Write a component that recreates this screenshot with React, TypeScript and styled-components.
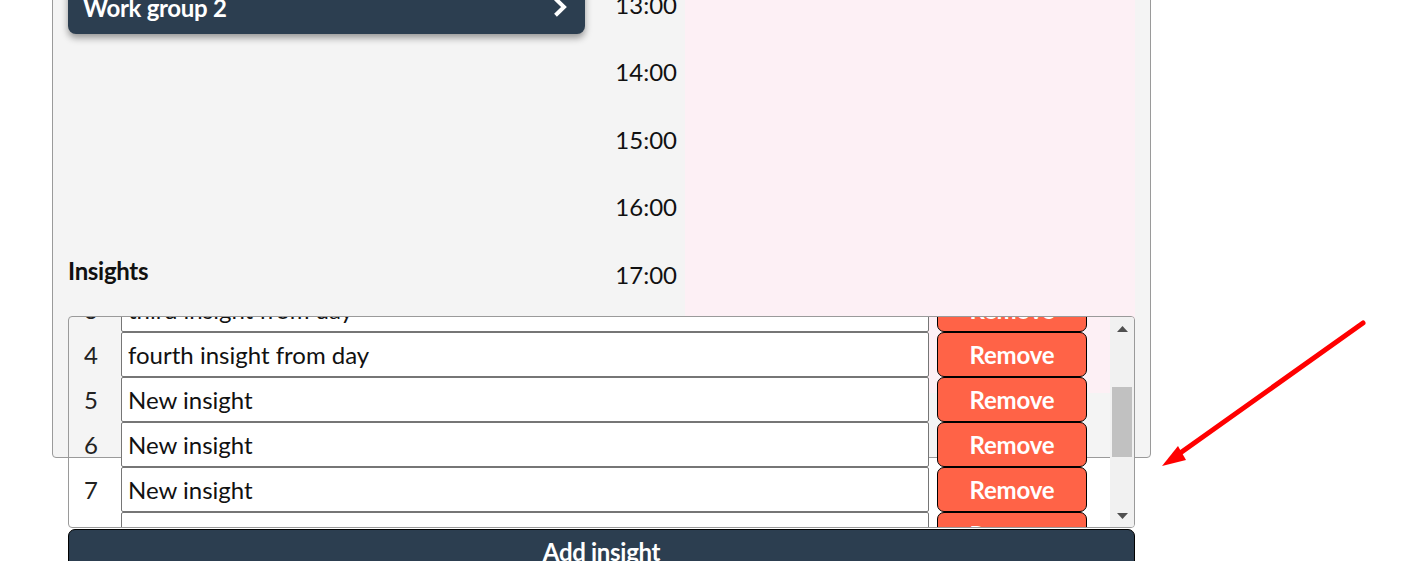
import React, { useLayoutEffect, useRef } from "react";
import styled, { createGlobalStyle } from "styled-components";

const GlobalStyle = createGlobalStyle`
  html, body {
    margin: 0;
    padding: 0;
    background: #ffffff;
    overflow: hidden;
  }
  body {
    font-family: Lato, "Noto Sans", sans-serif;
    color: #111;
  }
  * { box-sizing: border-box; }
`;

const Page = styled.div`
  position: relative;
  height: 561px;
  overflow: hidden;
  padding-left: 52px;
`;

const Panel = styled.section`
  width: 1099px;
  height: 570px;
  margin-top: -112px;
  padding: 15px;
  background: #f4f4f4;
  border: 1px solid #9a9a9a;
  border-radius: 4px;
  display: grid;
  grid-template-columns: 517px 1fr;
  grid-template-rows: 352px auto;
  align-content: start;
`;

const GroupList = styled.div`
  grid-column: 1;
  grid-row: 1;
  display: flex;
  flex-direction: column;
  gap: 16px;
  padding-top: 6px;
`;

const GroupButton = styled.button`
  height: 54px;
  padding: 0 18px 0 15px;
  display: flex;
  align-items: center;
  justify-content: space-between;
  background: #2c3e50;
  color: #fff;
  border: none;
  border-radius: 8px;
  box-shadow: 0 4px 7px rgba(0, 0, 0, 0.38);
  font-family: Lato, sans-serif;
  font-weight: 700;
  font-size: 24px;
  line-height: 29px;
  letter-spacing: -0.3px;
`;

const Schedule = styled.div`
  grid-column: 2;
  grid-row: 1 / 3;
  align-self: start;
  display: grid;
  grid-template-columns: 100px 1fr;
`;

const HourColumn = styled.div`
  display: flex;
  flex-direction: column;
`;

const HourLabel = styled.div`
  height: 67.5px;
  display: flex;
  align-items: center;
  justify-content: flex-end;
  padding-right: 8px;
  padding-bottom: 2px;
  font-size: 24px;
  line-height: 29px;
  color: #111;
`;

const DayArea = styled.div`
  height: 489px;
  background: #fdf0f5;
`;

const InsightsSection = styled.div`
  grid-column: 1 / -1;
  grid-row: 2;
  display: flex;
  flex-direction: column;
`;

const Heading = styled.h3`
  margin: 0 0 31px;
  font-size: 24px;
  line-height: 29px;
  font-weight: 700;
  letter-spacing: -0.3px;
  color: #111;
`;

const ListFrame = styled.div`
  height: 212px;
  border: 1px solid #9a9a9a;
  border-radius: 4px;
  display: flex;
  overflow: hidden;
`;

const RowsViewport = styled.div`
  flex: 1;
  overflow: hidden;
`;

const RowsContent = styled.div`
  padding: 21px 0;
`;

const Row = styled.div`
  height: 45px;
  display: grid;
  grid-template-columns: 44px 1fr 150px;
  column-gap: 8px;
  padding-right: 23px;
  align-items: center;
`;

const RowNumber = styled.span`
  text-align: center;
  font-size: 24px;
  color: #222;
`;

const InsightInput = styled.input`
  height: 45px;
  width: 100%;
  border: 1px solid #767676;
  border-radius: 2px;
  padding: 0 6px;
  background: #fff;
  font-family: Lato, sans-serif;
  font-size: 24px;
  color: #111;
  outline: none;
`;

const RemoveButton = styled.button`
  height: 45px;
  border: 1px solid #000;
  border-radius: 7px;
  background: #ff6347;
  color: #fff;
  font-family: Lato, sans-serif;
  font-weight: 700;
  font-size: 24px;
  letter-spacing: -0.2px;
  padding: 0;
`;

const ScrollBar = styled.div`
  width: 24px;
  background: #f1f1f1;
  display: flex;
  flex-direction: column;
`;

const ScrollArrow = styled.div`
  height: 23px;
  display: flex;
  align-items: center;
  justify-content: center;
`;

const ScrollTrack = styled.div`
  flex: 1;
  padding: 0 2px;
`;

const ScrollThumb = styled.div`
  background: #c1c1c1;
`;

const AddButton = styled.button`
  margin-top: 1px;
  height: 45px;
  width: 100%;
  border: 1px solid #000;
  border-radius: 7px;
  background: #2c3e50;
  color: #fff;
  font-family: Lato, sans-serif;
  font-weight: 700;
  font-size: 24px;
  letter-spacing: -0.3px;
`;

const Annotation = styled.svg`
  position: absolute;
  left: 0;
  top: 0;
  pointer-events: none;
`;

const insights = [
  "first insight from day",
  "second insight from day",
  "third insight from day",
  "fourth insight from day",
  "New insight",
  "New insight",
  "New insight",
  "New insight",
  "New insight",
  "New insight",
];

const hours = ["12:00", "13:00", "14:00", "15:00", "16:00", "17:00", "18:00"];

const SCROLL_TOP = 141;
const VIEW_H = 210;
const ROW_H = 45;
const PAD = 21;
const ARROW_H = 23;

const Chevron = () => (
  <svg width="14" height="20" viewBox="0 0 14 20">
    <path d="M2.5 1.8 L11 10 L2.5 18.2" fill="none" stroke="#fff" strokeWidth="4" />
  </svg>
);

const Triangle = ({ up }: { up: boolean }) => (
  <svg width="11" height="6" viewBox="0 0 11 6">
    <path d={up ? "M0 6 L5.5 0 L11 6 Z" : "M0 0 L5.5 6 L11 0 Z"} fill="#505050" />
  </svg>
);

export default function App() {
  const viewportRef = useRef<HTMLDivElement>(null);

  useLayoutEffect(() => {
    if (viewportRef.current) viewportRef.current.scrollTop = SCROLL_TOP;
  }, []);

  const contentH = PAD * 2 + insights.length * ROW_H;
  const trackH = VIEW_H - ARROW_H * 2;
  const thumbH = (VIEW_H / contentH) * trackH;
  const thumbTop = (SCROLL_TOP / contentH) * trackH;

  return (
    <>
      <GlobalStyle />
      <Page>
        <Panel>
          <GroupList>
            <GroupButton>
              <span>Work group 1</span>
              <Chevron />
            </GroupButton>
            <GroupButton>
              <span>Work group 2</span>
              <Chevron />
            </GroupButton>
          </GroupList>

          <Schedule>
            <HourColumn>
              {hours.map((h) => (
                <HourLabel key={h}>{h}</HourLabel>
              ))}
            </HourColumn>
            <DayArea />
          </Schedule>

          <InsightsSection>
            <Heading>Insights</Heading>
            <ListFrame>
              <RowsViewport ref={viewportRef}>
                <RowsContent>
                  {insights.map((text, i) => (
                    <Row key={i}>
                      <RowNumber>{i + 1}</RowNumber>
                      <InsightInput defaultValue={text} />
                      <RemoveButton>Remove</RemoveButton>
                    </Row>
                  ))}
                </RowsContent>
              </RowsViewport>
              <ScrollBar>
                <ScrollArrow>
                  <Triangle up />
                </ScrollArrow>
                <ScrollTrack>
                  <ScrollThumb style={{ marginTop: thumbTop, height: thumbH }} />
                </ScrollTrack>
                <ScrollArrow>
                  <Triangle up={false} />
                </ScrollArrow>
              </ScrollBar>
            </ListFrame>
            <AddButton>Add insight</AddButton>
          </InsightsSection>
        </Panel>

        <Annotation width="1426" height="561" viewBox="0 0 1426 561">
          <line x1="1363" y1="323" x2="1176" y2="456" stroke="#ff0000" strokeWidth="5" strokeLinecap="round" />
          <path d="M1162 466 L1178 446 L1186 460 Z" fill="#ff0000" />
        </Annotation>
      </Page>
    </>
  );
}
